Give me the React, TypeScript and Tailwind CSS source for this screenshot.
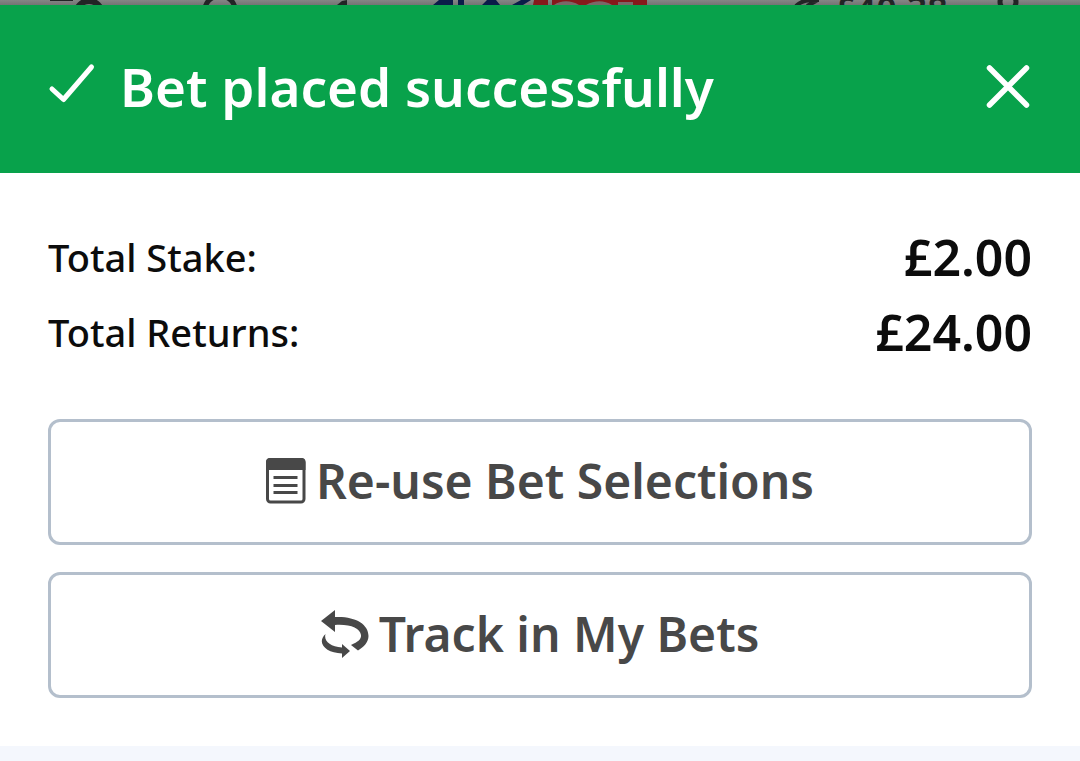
import React from "react";

function TopStrip() {
  return (
    <div className="relative h-[5px] overflow-hidden bg-gradient-to-b from-[#858585] to-[#747474]" aria-hidden="true">
      <svg className="absolute top-0 left-[48px] h-[60px] w-[320px]" viewBox="0 0 320 60" fill="none" stroke="#222425" strokeWidth="6">
        <path d="M2 -2H25" />
        <circle cx="41" cy="14" r="13" />
        <path d="M157 8C160 -8 184 -8 187 8" strokeWidth="5" />
        <path d="M289 5L294 1L299 0V5Z" fill="#222425" stroke="none" />
      </svg>
      <svg className="absolute top-0 left-[430px] h-[5px] w-[220px]" viewBox="0 0 220 5">
        <path d="M3 5L9 0H23V5ZM28 0H34V5H28ZM57 0H66L70 5H52ZM91 0H101L93 5H82Z" fill="#0a1c49" />
        <path d="M104 0H118V5H103ZM122 0H217V5H122Z" fill="#86191b" />
        <path d="M124 5C131 0 141 0 149 5ZM156 5C165 0 174 0 182 5ZM188 2H203V5H188Z" fill="#7a6868" />
      </svg>
      <svg className="absolute top-0 left-[790px] h-[5px] w-[45px]" viewBox="0 0 45 5" fill="none" stroke="#222425" strokeWidth="4">
        <path d="M6 6C12 0 18 0 29 0M17 6L28 0" />
      </svg>
      <span className="absolute top-[-8px] left-[835px] font-['Noto_Sans',sans-serif] text-[36px] leading-[36px] font-semibold text-[#222425]">£40.38</span>
      <svg className="absolute top-0 left-[995px] h-[24px] w-[28px]" viewBox="0 0 28 24" fill="none" stroke="#222425" strokeWidth="5">
        <circle cx="13" cy="2" r="8" />
      </svg>
    </div>
  );
}

function TotalRow({ label, value }: { label: string; value: string }) {
  return (
    <div className="flex h-[75px] items-center justify-between">
      <dt className="text-[38px] leading-[48px]">{label}</dt>
      <dd className="text-[50px] leading-[60px] font-semibold">{value}</dd>
    </div>
  );
}

function ActionButton({ icon, children }: { icon: React.ReactNode; children: React.ReactNode }) {
  return (
    <button
      type="button"
      className="flex h-[126px] w-full items-center justify-center gap-2.5 rounded-xl border-3 border-[#b4bfcc] bg-white pb-0.5 text-[48px] leading-[60px] font-semibold text-[#484848]"
    >
      {icon}
      {children}
    </button>
  );
}

function SlipIcon() {
  return (
    <svg className="h-[46px] w-[40px]" viewBox="0 0 40 46" fill="none" aria-hidden="true">
      <rect x="1.5" y="1.5" width="36.5" height="42.5" rx="3" stroke="#484848" strokeWidth="3" />
      <path d="M0 12V4Q0 0 4 0H35.500Q39.500 0 39.500 4V12Z" fill="#484848" />
      <path d="M7.500 19.500H31.500M7.500 27.500H31.500M7.500 34.500H31.500" stroke="#484848" strokeWidth="3" />
    </svg>
  );
}

function TrackIcon() {
  return (
    <svg className="h-[48px] w-[48px]" viewBox="0 0 48 48" fill="#484848" aria-hidden="true">
      <path d="M0 11L14 0V7C34 6 47.500 14 47.500 26C47.500 32 43 37 37 40.500L30 35C37 32 40.500 29 40 25C39 18 29 14 14 15V22Z" />
      <path d="M4.500 24C2.500 31 9 36.500 21 37.500V34L29 41L21 48V43.500C5 43-5 33 4.500 24Z" />
    </svg>
  );
}

export default function App() {
  return (
    <div className="min-h-screen bg-[#f4f7fd] font-['Noto_Sans',sans-serif] font-medium text-[#0c0c0c]">
      <TopStrip />
      <main className="bg-white">
        <header className="flex h-[168px] items-center justify-between bg-[#08a24b] px-12 pb-1 text-white">
          <div className="flex items-center gap-6">
            <svg className="h-[48px] w-[48px]" viewBox="0 0 48 48" fill="none" stroke="currentColor" strokeWidth="5" strokeLinecap="round" strokeLinejoin="round" aria-hidden="true">
              <path d="M4 26L15.500 36.500L43.500 4" />
            </svg>
            <h1 className="text-[53px] leading-[64px] font-semibold">Bet placed successfully</h1>
          </div>
          <button type="button" aria-label="Close">
            <svg className="h-[48px] w-[48px]" viewBox="0 0 48 48" fill="none" stroke="currentColor" strokeWidth="5.500" strokeLinecap="round" aria-hidden="true">
              <path d="M5.500 5L42.500 42M42.500 5L5.500 42" />
            </svg>
          </button>
        </header>
        <section className="px-12 pt-[46px] pb-12">
          <dl>
            <TotalRow label="Total Stake:" value="£2.00" />
            <TotalRow label="Total Returns:" value="£24.00" />
          </dl>
          <div className="mt-[50px] flex flex-col gap-[27px]">
            <ActionButton icon={<SlipIcon />}>Re-use Bet Selections</ActionButton>
            <ActionButton icon={<TrackIcon />}>Track in My Bets</ActionButton>
          </div>
        </section>
      </main>
    </div>
  );
}
